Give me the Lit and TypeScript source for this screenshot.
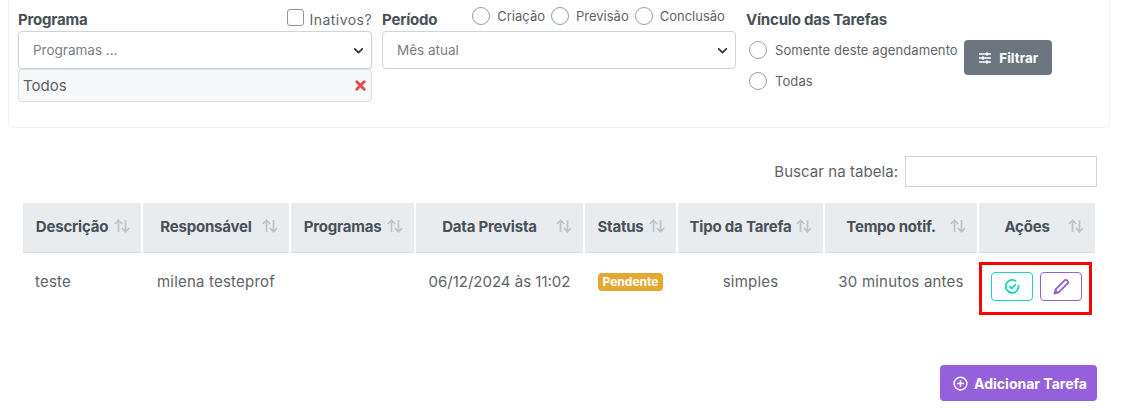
import { LitElement, html, css } from "lit";
import { customElement } from "lit/decorators.js";

const chevron = html`<svg class="chev" width="11" height="11" viewBox="0 0 16 16"><path d="M2.5 5.5 8 11l5.5-5.5" fill="none" stroke="#343a40" stroke-width="2.6" stroke-linecap="round" stroke-linejoin="round"/></svg>`;
const sort = html`<svg class="sort" width="18" height="16" viewBox="0 0 18 16"><path d="M5.5 14V2.5M1.8 6 5.5 2.2 9.2 6M12.5 2v11.5M8.8 10l3.7 3.8 3.7-3.8" fill="none" stroke="#c0c3c6" stroke-width="1.7"/></svg>`;

@customElement("app-root")
export class AppRoot extends LitElement {
  static styles = css`
    :host { display: block; width: 1123px; height: 410px; overflow: hidden; background: #fff; font-family: Inter, "Liberation Sans", sans-serif; color: #5f6368; font-size: 14px; }
    * { box-sizing: border-box; }
    .card { margin: 0 13px 0 8px; height: 128px; border: 1px solid #eef0f2; border-top: 0; border-radius: 0 0 6px 6px; padding: 7px 9px 0; display: grid; grid-template-columns: 354px 354px 1fr; column-gap: 10px; }
    .label { font-weight: 700; font-size: 15px; color: #495057; letter-spacing: -0.2px; }
    .row-top { display: flex; align-items: center; height: 24px; }
    .grow { flex: 1; }
    .check { width: 17px; height: 17px; border: 1px solid #8d96a0; border-radius: 3px; margin: -3px 6px 0 0; }
    .ina { font-size: 14px; letter-spacing: 0.45px; }
    .small { font-size: 13px; }
    .wide { letter-spacing: 0.1px; }
    .radio { width: 18px; height: 18px; border: 1px solid #93a1ad; border-radius: 50%; flex: none; }
    .radios { display: flex; align-items: center; margin-left: 35px; margin-top: -6px; }
    .radios .radio { margin-right: 7px; }
    .radios .small { margin-right: 6px; }
    .select { height: 38px; border: 1px solid #ced4da; border-radius: 4px; display: flex; align-items: center; justify-content: space-between; padding: 0 7px 0 14px; color: #7a8087; font-size: 13.5px; background: #fff; }
    .shadow { box-shadow: 0 1px 2px rgba(0,0,0,.12); }
    .chip { height: 33px; background: #f6f7f9; border: 1px solid #dde0e4; border-radius: 4px; display: flex; align-items: center; justify-content: space-between; padding: 0 5px 0 4px; font-size: 15px; color: #5f6368; }
    .x { width: 11px; height: 11px; }
    .link-body { display: flex; align-items: flex-start; }
    .opts { display: flex; flex-direction: column; gap: 13px; margin: 10px 6px 0 3px; }
    .opt { display: flex; align-items: center; gap: 8px; white-space: nowrap; }
    .btn { border: 0; color: #fff; font: inherit; font-weight: 700; border-radius: 4px; display: flex; align-items: center; justify-content: center; gap: 6px; }
    .filter { width: 88px; height: 35px; background: #6c757d; font-size: 13.5px; margin-top: 9px; gap: 7px; padding: 0 0 0 1px; }
    .search { display: flex; justify-content: flex-end; align-items: center; gap: 7px; margin: 28px 26px 16px 0; font-size: 15px; letter-spacing: 0.05px; }
    .search div { width: 192px; height: 31px; border: 1px solid #ced4da; }
    .table { margin-left: 23px; display: grid; grid-template-columns: 118px 146px 123px 167px 91px 145px 152px 116px; column-gap: 2px; width: 1072px; }
    .th { height: 50px; background: #e9ecef; border-bottom: 1px solid #dee2e6; color: #495057; font-weight: 700; font-size: 15px; letter-spacing: -0.2px; display: flex; align-items: center; padding: 0 10px 2px 8px; white-space: nowrap; }
    .th span { flex: 1; text-align: center; }
    .sort { margin-top: -2px; }
    .td { height: 65px; display: flex; align-items: center; justify-content: center; white-space: nowrap; font-size: 15px; letter-spacing: 0.2px; padding-bottom: 8px; }
    .date { letter-spacing: 0; }
    .left { justify-content: flex-start; padding-left: 12px; }
    .stat { padding-left: 13px; }
    .badge { background: #e5a833; color: #fff; font-size: 12px; letter-spacing: 0; font-weight: 700; height: 18px; width: 65px; border-radius: 4px; display: flex; align-items: center; justify-content: center; }
    .acts { justify-content: flex-start; align-items: flex-start; padding: 9px 0 0; }
    .actions { width: 113px; height: 53px; border: 3px solid #f00; display: flex; gap: 7px; align-items: flex-start; padding: 7px 0 0 9px; }
    .act { width: 42px; height: 29px; border-radius: 4px; border: 1px solid; display: flex; align-items: center; justify-content: center; }
    .teal { border-color: #14d6c0; color: #14d6c0; }
    .purple { border-color: #9560dc; color: #9560dc; }
    .foot { display: flex; justify-content: flex-end; margin: 47px 26px 0 0; }
    .add { width: 157px; height: 36px; background: #9560dc; font-size: 14px; gap: 6px; padding: 0 0 0 3px; }
  `;

  render() {
    const headers = ["Descrição", "Responsável", "Programas", "Data Prevista", "Status", "Tipo da Tarefa", "Tempo notif.", "Ações"];
    return html`
      <div class="card">
        <div>
          <div class="row-top"><span class="label">Programa</span><span class="grow"></span><span class="check"></span><span class="ina">Inativos?</span></div>
          <div class="select shadow">Programas ...${chevron}</div>
          <div class="chip">Todos<svg class="x" viewBox="0 0 12 12"><path d="M2 2l8 8M10 2l-8 8" stroke="#e04b4b" stroke-width="3.2" stroke-linecap="round"/></svg></div>
        </div>
        <div>
          <div class="row-top"><span class="label">Período</span>
            <div class="radios">
              <span class="radio"></span><span class="small">Criação</span>
              <span class="radio"></span><span class="small">Previsão</span>
              <span class="radio"></span><span class="small">Conclusão</span>
            </div>
          </div>
          <div class="select">Mês atual${chevron}</div>
        </div>
        <div>
          <div class="row-top"><span class="label">Vínculo das Tarefas</span></div>
          <div class="link-body">
            <div class="opts">
              <div class="opt"><span class="radio"></span><span class="small wide">Somente deste agendamento</span></div>
              <div class="opt"><span class="radio"></span><span class="small wide">Todas</span></div>
            </div>
            <button class="btn filter"><svg width="14" height="14" viewBox="0 0 14 14"><path d="M1 3h12M1 7h12M1 11h12M9 1.2v3.6M5 5.2v3.6M9 9.2v3.6" stroke="#fff" stroke-width="1.5" fill="none"/></svg>Filtrar</button>
          </div>
        </div>
      </div>
      <div class="search">Buscar na tabela:<div></div></div>
      <div class="table">
        ${headers.map((h) => html`<div class="th"><span>${h}</span>${sort}</div>`)}
        <div class="td left">teste</div>
        <div class="td">milena testeprof</div>
        <div class="td"></div>
        <div class="td date">06/12/2024 às 11:02</div>
        <div class="td left stat"><span class="badge">Pendente</span></div>
        <div class="td">simples</div>
        <div class="td">30 minutos antes</div>
        <div class="td acts"><div class="actions">
          <div class="act teal"><svg width="15" height="15" viewBox="0 0 14 14" fill="none" stroke="currentColor" stroke-width="1.7"><path d="M12.6 5.6A6 6 0 1 1 10.5 2.2"/><path d="M4.2 6.6 6.4 8.8 10 5"/></svg></div>
          <div class="act purple"><svg width="16" height="16" viewBox="0 0 16 16"><path d="M11.6 1.4a1.6 1.6 0 0 1 2.3 0l.7.7a1.6 1.6 0 0 1 0 2.3L5.6 13.4 1.5 14.5l1.1-4.1z" fill="none" stroke="currentColor" stroke-width="1.9" stroke-linejoin="round"/><path d="M2.6 10.4 1.5 14.5l4.1-1.1z" fill="currentColor"/></svg></div>
        </div></div>
      </div>
      <div class="foot"><button class="btn add"><svg width="15" height="15" viewBox="0 0 16 16" fill="none" stroke="#fff" stroke-width="1.6"><circle cx="8" cy="8" r="6.8"/><path d="M8 4.5v7M4.5 8h7"/></svg>Adicionar Tarefa</button></div>
    `;
  }
}
